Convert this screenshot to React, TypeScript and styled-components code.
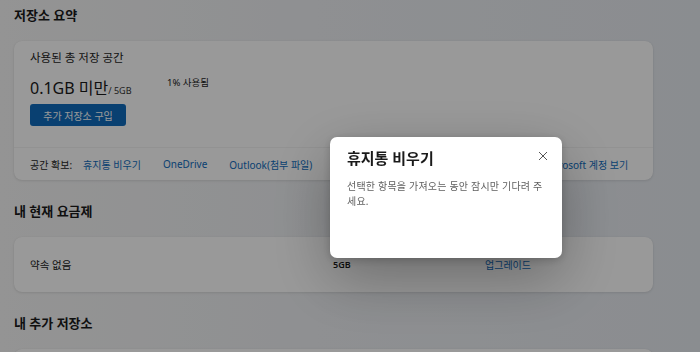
import React from "react";
import styled, { createGlobalStyle } from "styled-components";

const Global = createGlobalStyle`
  html, body { margin: 0; padding: 0; }
  body {
    font-family: "Noto Sans", "Noto Sans CJK KR", sans-serif;
    background: linear-gradient(90deg, #f7f7f7 0%, #eef0f3 45%, #e7ebf1 100%);
    color: #1b1b1b;
    width: 700px;
    height: 352px;
    overflow: hidden;
  }
`;

const Page = styled.main`
  width: 639px;
  padding: 5px 14px 0;
  display: flex;
  flex-direction: column;
`;

const SectionTitle = styled.h2<{ $first?: boolean }>`
  margin: ${(p) => (p.$first ? "0" : "21px")} 0 16px;
  font-size: 13px;
  line-height: 20px;
  height: 20px;
  font-weight: 600;
  color: #1a1a1a;
`;

const Card = styled.section`
  background: #ffffff;
  border-radius: 8px;
  box-shadow: 0 1px 3px rgba(0, 0, 0, 0.1), 0 0 1px rgba(0, 0, 0, 0.08);
  display: flex;
  flex-direction: column;
`;

const CardBody = styled.div`
  padding: 9px 16px 21px;
  display: flex;
  flex-direction: column;
`;

const CardLabel = styled.div`
  font-size: 11.5px;
  line-height: 16px;
  height: 16px;
  color: #242424;
`;

const UsageRow = styled.div`
  display: flex;
  margin-top: 11px;
`;

const UsageLeft = styled.div`
  width: 137px;
  display: flex;
  flex-direction: column;
  gap: 5px;
`;

const Amount = styled.div`
  display: flex;
  align-items: baseline;
  height: 22px;
  line-height: 22px;
  font-size: 16px;
  color: #1a1a1a;
  white-space: nowrap;
`;

const AmountTotal = styled.span`
  font-size: 9px;
  line-height: 22px;
  color: #333;
`;

const UsedPct = styled.div`
  font-size: 9.5px;
  line-height: 11px;
  color: #242424;
`;

const PrimaryButton = styled.button`
  width: 96px;
  height: 22px;
  border: none;
  border-radius: 3px;
  background: #0f6cbd;
  color: #fff;
  font-family: inherit;
  font-size: 10px;
  padding: 0;
`;

const Footer = styled.div`
  height: 33px;
  padding: 0 16px;
  border-top: 1px solid #f3f3f3;
  box-sizing: border-box;
  display: flex;
  align-items: center;
  font-size: 10px;
  color: #242424;
  gap: 22px;
`;

const FooterLabel = styled.span`
  margin-right: -11px;
`;

const Link = styled.a`
  color: #0f6cbd;
  text-decoration: none;
  font-size: 10px;
  white-space: nowrap;
`;

const PlanRow = styled.div`
  height: 55px;
  padding: 0 16px;
  display: grid;
  grid-template-columns: 303px 152px 1fr;
  align-items: center;
  font-size: 10.5px;
`;

const PlanSize = styled.span`
  font-size: 9px;
  font-weight: 600;
`;

const Overlay = styled.div`
  position: fixed;
  inset: 0;
  background: rgba(0, 0, 0, 0.4);
`;

const Dialog = styled.div`
  position: fixed;
  left: 330px;
  top: 137px;
  width: 232px;
  height: 121px;
  box-sizing: border-box;
  background: #fff;
  border-radius: 7px;
  padding: 9px 11px 0 17px;
  box-shadow: 0 20px 60px rgba(0, 0, 0, 0.3), 0 2px 8px rgba(0, 0, 0, 0.2);
`;

const DialogHeader = styled.div`
  display: flex;
  justify-content: space-between;
  align-items: center;
  height: 22px;
`;

const DialogTitle = styled.h3`
  margin: 0;
  font-size: 15px;
  font-weight: 600;
  color: #1a1a1a;
`;

const CloseButton = styled.button`
  border: none;
  background: none;
  padding: 0;
  width: 16px;
  height: 16px;
  display: flex;
  align-items: center;
  justify-content: center;
  margin-top: -3px;
`;

const DialogText = styled.p`
  margin: 11px 0 0;
  width: 202px;
  font-size: 10px;
  letter-spacing: 0.2px;
  line-height: 15px;
  color: #616161;
`;

export default function App() {
  return (
    <>
      <Global />
      <Page>
        <SectionTitle $first>저장소 요약</SectionTitle>
        <Card>
          <CardBody>
            <CardLabel>사용된 총 저장 공간</CardLabel>
            <UsageRow>
              <UsageLeft>
                <Amount>
                  0.1GB 미만<AmountTotal>/ 5GB</AmountTotal>
                </Amount>
                <PrimaryButton>추가 저장소 구입</PrimaryButton>
              </UsageLeft>
              <UsedPct>1% 사용됨</UsedPct>
            </UsageRow>
          </CardBody>
          <Footer>
            <FooterLabel>공간 확보:</FooterLabel>
            <Link>휴지통 비우기</Link>
            <Link>OneDrive</Link>
            <Link>Outlook(첨부 파일)</Link>
            <Link>Outlook(이메일)</Link>
            <Link>Outlook(받은 편지함)</Link>
            <Link>Microsoft 계정 보기</Link>
          </Footer>
        </Card>

        <SectionTitle>내 현재 요금제</SectionTitle>
        <Card>
          <PlanRow>
            <span>약속 없음</span>
            <PlanSize>5GB</PlanSize>
            <Link>업그레이드</Link>
          </PlanRow>
        </Card>

        <SectionTitle>내 추가 저장소</SectionTitle>
        <Card>
          <PlanRow />
        </Card>
      </Page>
      <Overlay />
      <Dialog role="dialog">
        <DialogHeader>
          <DialogTitle>휴지통 비우기</DialogTitle>
          <CloseButton aria-label="닫기">
            <svg width="10" height="10" viewBox="0 0 10 10">
              <path d="M1 1 L9 9 M9 1 L1 9" stroke="#555" strokeWidth="1" />
            </svg>
          </CloseButton>
        </DialogHeader>
        <DialogText>선택한 항목을 가져오는 동안 잠시만 기다려 주세요.</DialogText>
      </Dialog>
    </>
  );
}
